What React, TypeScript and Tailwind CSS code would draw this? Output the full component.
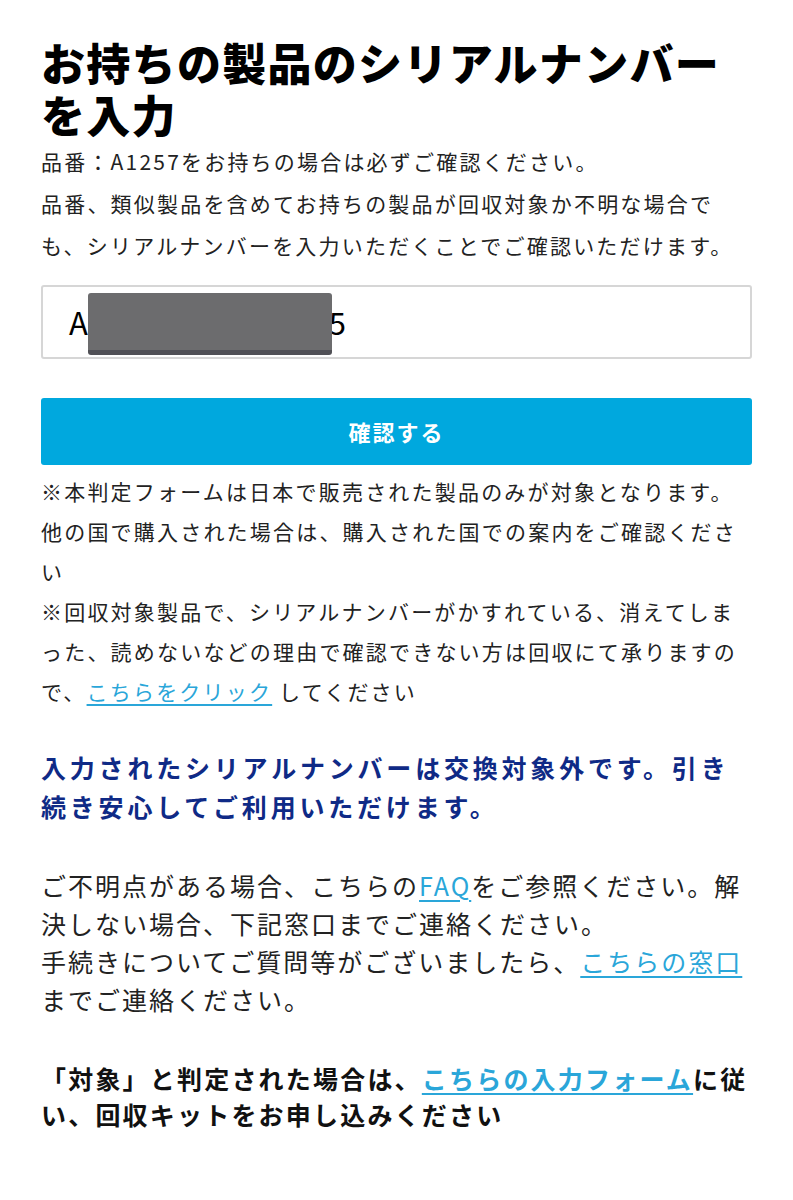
export default function App() {
  return (
    <div
      className="min-h-[1200px] bg-white px-[41px] pt-[36px] text-[#222]"
      style={{ fontFamily: '"Noto Sans CJK JP", "Noto Sans", sans-serif' }}
    >
      <h1 className="text-[44px] font-black leading-[52px] tracking-[1.3px] text-black">
        お持ちの製品のシリアルナンバーを入力
      </h1>

      <p className="text-[21px] leading-[42px] tracking-[2.2px]">
        品番：A1257をお持ちの場合は必ずご確認ください。
        <br />
        品番、類似製品を含めてお持ちの製品が回収対象か不明な場合でも、シリアルナンバーを入力いただくことでご確認いただけます。
      </p>

      <div className="relative mt-[19px] flex h-[74px] items-center rounded-[3px] border-2 border-[#d6d6d6] px-[26px]">
        <span className="text-[31px] tracking-[0px] text-black">A000000000000005</span>
        <div className="absolute left-[45px] top-[6px] h-[62px] w-[244px] rounded-[3px] border-b-[5px] border-[#505056] bg-[#6c6c6e]" />
      </div>

      <button className="mt-[39px] flex h-[67px] w-full items-center justify-center rounded-[3px] bg-[#00a8de] text-[22px] font-bold tracking-[2px] text-white">
        確認する
      </button>

      <p className="mt-[6px] text-[21px] leading-[40px] tracking-[2.2px]">
        ※本判定フォームは日本で販売された製品のみが対象となります。
        <br />
        他の国で購入された場合は、購入された国での案内をご確認ください
        <br />
        ※回収対象製品で、シリアルナンバーがかすれている、消えてしまった、読めないなどの理由で確認できない方は回収にて承りますので、
        <a href="#" className="text-[#2aa6d9] underline underline-offset-4">
          こちらをクリック
        </a>{' '}
        してください
      </p>

      <h2 className="mt-[37px] text-[25px] font-bold leading-[39px] tracking-[3.8px] text-[#0f2a86]">
        入力されたシリアルナンバーは交換対象外です。引き続き安心してご利用いただけます。
      </h2>

      <p className="mt-[40px] text-[25px] leading-[38px] tracking-[2px]">
        ご不明点がある場合、こちらの
        <a href="#" className="text-[#2aa6d9] underline underline-offset-4">
          FAQ
        </a>
        をご参照ください。解決しない場合、下記窓口までご連絡ください。
        <br />
        手続きについてご質問等がございましたら、
        <a href="#" className="text-[#2aa6d9] underline underline-offset-4">
          こちらの窓口
        </a>
        までご連絡ください。
      </p>

      <p className="mt-[42px] text-[25px] font-bold leading-[36px] tracking-[2.2px] text-[#111]">
        「対象」と判定された場合は、
        <a href="#" className="text-[#2aa6d9] underline underline-offset-4">
          こちらの入力フォーム
        </a>
        に従い、回収キットをお申し込みください
      </p>
    </div>
  )
}
